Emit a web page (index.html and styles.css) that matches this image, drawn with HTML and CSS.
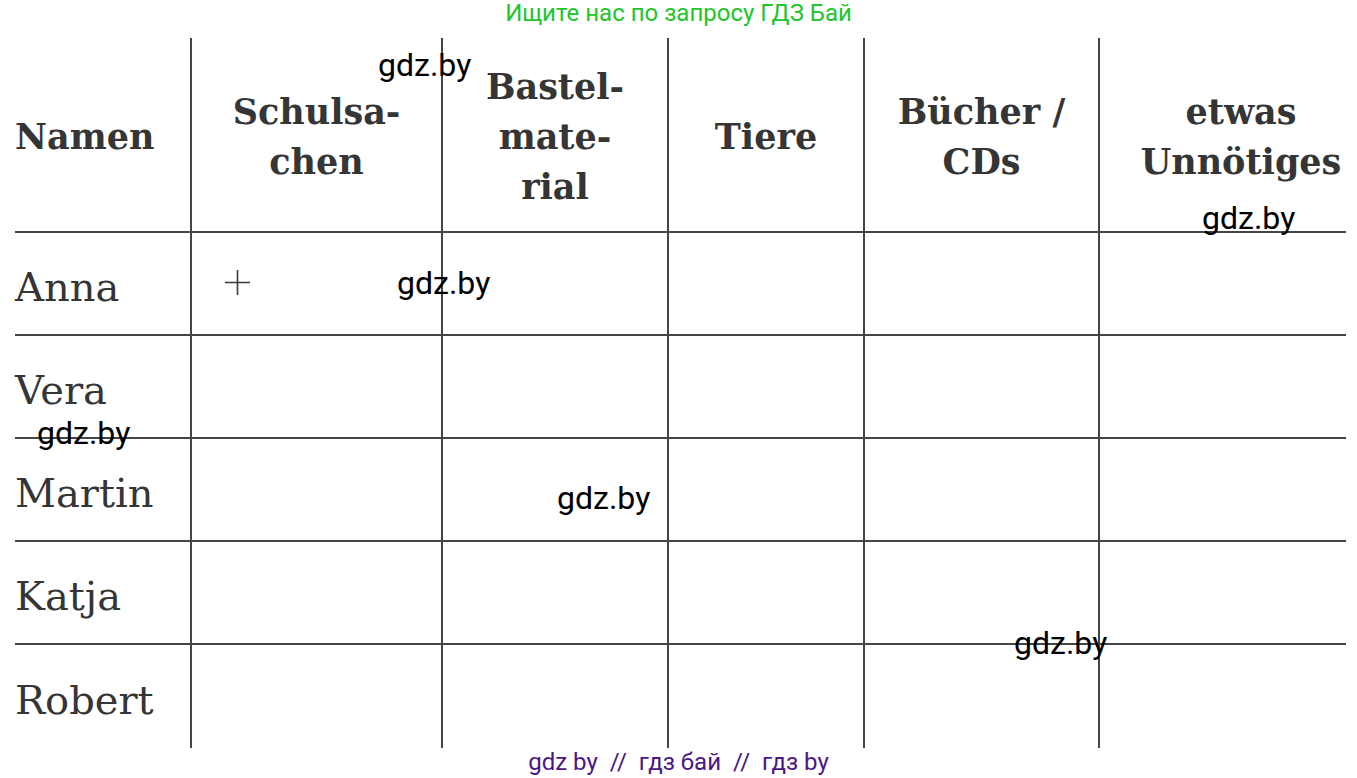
FILE: index.html
```html
<!DOCTYPE html>
<html lang="de">
<head>
<meta charset="utf-8">
<title>Tabelle</title>
<link rel="stylesheet" href="styles.css">
</head>
<body>
<div class="page">
  <div class="banner">Ищите нас по запросу ГДЗ Бай</div>
  <div class="grid">
    <div class="cell head first">Namen</div>
    <div class="cell head">Schulsa-<br>chen</div>
    <div class="cell head">Bastel-<br>mate-<br>rial</div>
    <div class="cell head">Tiere</div>
    <div class="cell head">Bücher /<br>CDs</div>
    <div class="cell head last">etwas<br>Unnötiges</div>

    <div class="cell name first">Anna</div>
    <div class="cell mark"><svg class="plus" width="25" height="25" viewBox="0 0 25 25"><path d="M0 12.5H25M12.5 0V25" stroke="#3a3a3a" stroke-width="1.6" fill="none"/></svg></div>
    <div class="cell"></div><div class="cell"></div><div class="cell"></div><div class="cell"></div>

    <div class="cell name first">Vera</div>
    <div class="cell"></div><div class="cell"></div><div class="cell"></div><div class="cell"></div><div class="cell"></div>

    <div class="cell name first">Martin</div>
    <div class="cell"></div><div class="cell"></div><div class="cell"></div><div class="cell"></div><div class="cell"></div>

    <div class="cell name first">Katja</div>
    <div class="cell"></div><div class="cell"></div><div class="cell"></div><div class="cell"></div><div class="cell"></div>

    <div class="cell name first bottom">Robert</div>
    <div class="cell bottom"></div><div class="cell bottom"></div><div class="cell bottom"></div><div class="cell bottom"></div><div class="cell bottom"></div>
  </div>
  <div class="footer">gdz by  //  гдз бай  //  гдз by</div>

  <div class="wm wm1">gdz.by</div>
  <div class="wm wm2">gdz.by</div>
  <div class="wm wm3">gdz.by</div>
  <div class="wm wm4">gdz.by</div>
  <div class="wm wm5">gdz.by</div>
  <div class="wm wm6">gdz.by</div>
</div>
</body>
</html>
```

FILE: styles.css
```css
html, body {
  margin: 0;
  padding: 0;
  background: #ffffff;
}

.page {
  position: relative;
  width: 1357px;
  height: 778px;
  overflow: hidden;
}

.banner {
  height: 38px;
  box-sizing: border-box;
  text-align: center;
  font-family: Roboto, "Liberation Sans", sans-serif;
  font-size: 24px;
  line-height: 26px;
  color: #22c42c;
}

.grid {
  display: grid;
  margin-left: 15px;
  width: 1331px;
  grid-template-columns: 175px 251px 226px 196px 235px 248px;
  grid-template-rows: 195px repeat(5, 103px);
}

.cell {
  box-sizing: border-box;
  border-left: 2px solid #454545;
  border-bottom: 2px solid #454545;
  color: #353535;
}

.cell.first {
  border-left: none;
}

.cell.bottom {
  border-bottom: none;
}

.head {
  display: flex;
  align-items: center;
  justify-content: center;
  text-align: center;
  font-family: "DejaVu Serif", serif;
  font-weight: bold;
  font-size: 35px;
  line-height: 50px;
  padding-top: 4px;
}

.head.first {
  justify-content: flex-start;
}

.head.last {
  padding-left: 36px;
}

.name {
  display: flex;
  align-items: center;
  font-family: "DejaVu Serif", serif;
  font-size: 40px;
  padding-top: 6px;
}

.mark {
  display: flex;
  align-items: center;
  padding-left: 33px;
  padding-bottom: 2px;
}

.plus {
  display: block;
}

.footer {
  margin-top: 1px;
  text-align: center;
  white-space: pre;
  font-family: Roboto, "Liberation Sans", sans-serif;
  font-size: 24px;
  line-height: 26px;
  color: #4a1685;
}

.wm {
  position: absolute;
  font-family: Roboto, "Liberation Sans", sans-serif;
  font-size: 32px;
  line-height: 1;
  color: #000000;
}

.wm1 { left: 378px; top: 49px; }
.wm2 { left: 1202px; top: 202px; }
.wm3 { left: 397px; top: 267px; }
.wm4 { left: 37px; top: 417px; }
.wm5 { left: 557px; top: 482px; }
.wm6 { left: 1014px; top: 627px; }
```
